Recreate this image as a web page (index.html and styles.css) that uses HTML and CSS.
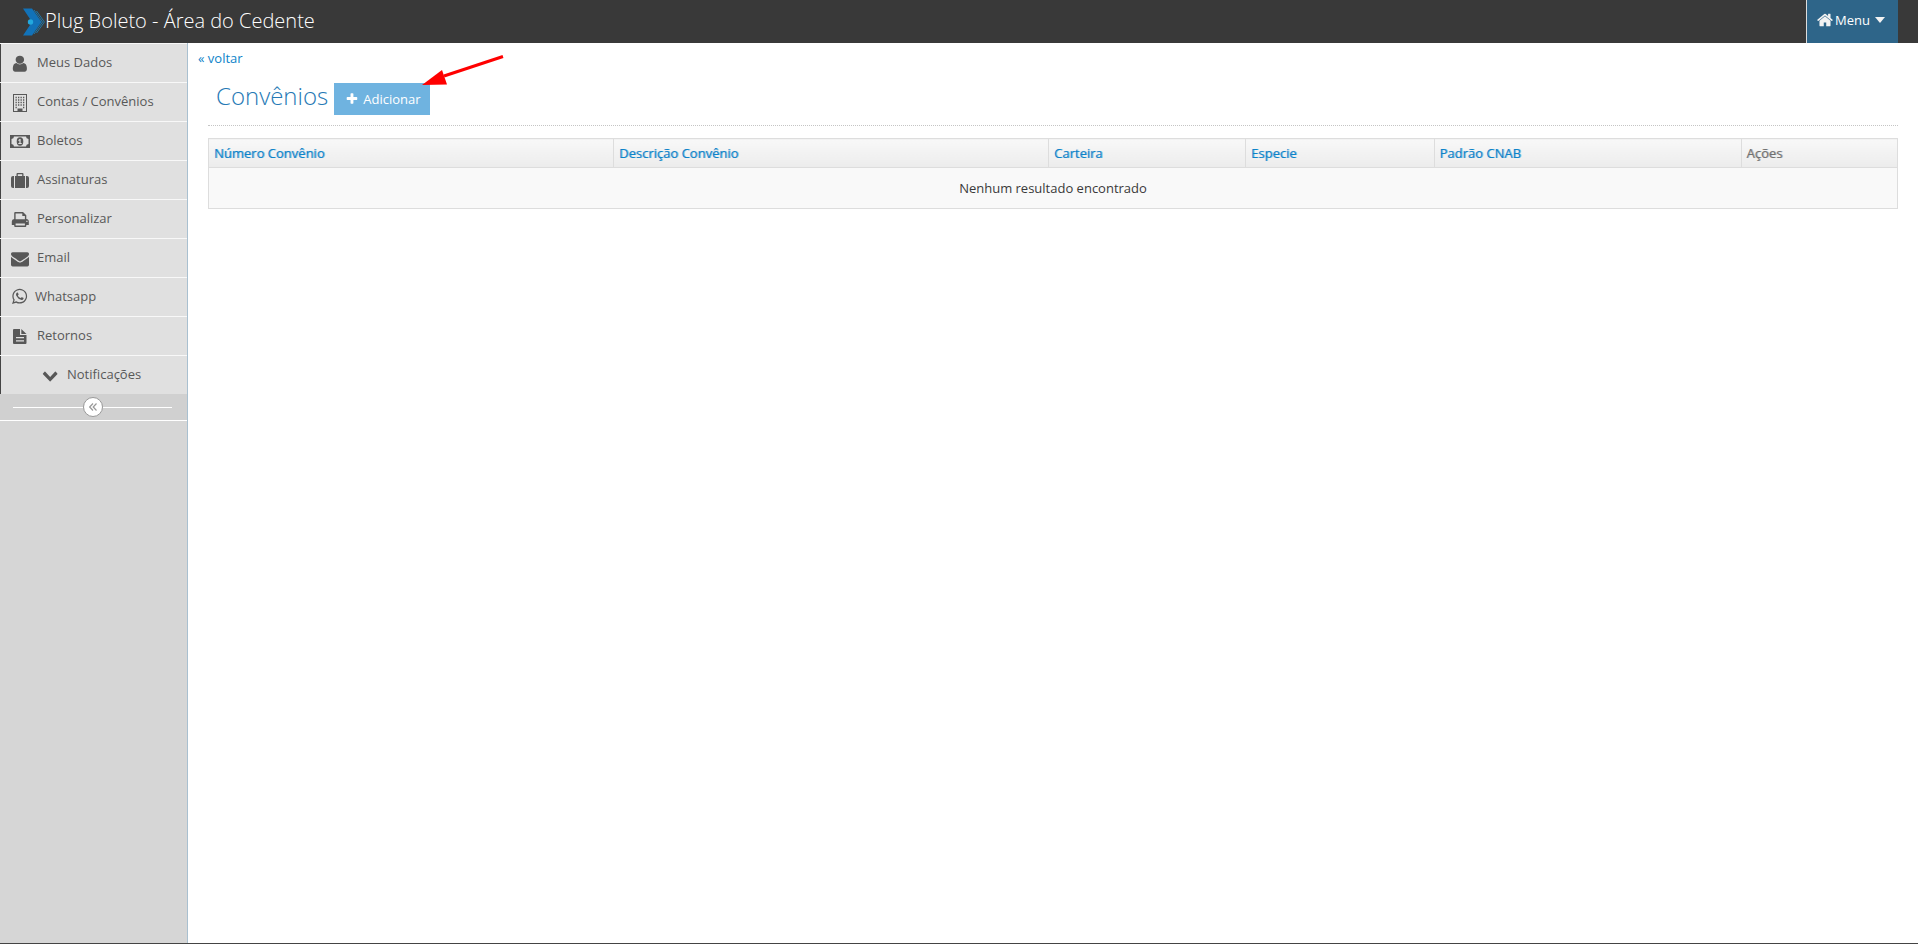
FILE: index.html
```html
<!DOCTYPE html>
<html lang="pt-BR">
<head>
<meta charset="utf-8">
<title>Plug Boleto - Área do Cedente</title>
<link rel="stylesheet" href="styles.css">
</head>
<body>
<header class="navbar">
  <a class="brand" href="#">
    <svg class="logo" viewBox="0 0 22 28" aria-hidden="true">
      <path d="M0 .5H9L18.500 14L9 27.500H0L9 14Z" fill="#1272b8"/>
      <circle cx="7.500" cy="14" r="2.700" fill="#22a9de"/>
      <path d="M11 2L19.500 14L11 26M13.500 3L21.400 14L13.500 25" fill="none" stroke="#1b86c4" stroke-width=".8"/>
    </svg>
    <span>Plug Boleto - Área do Cedente</span>
  </a>
  <button class="menu-button" type="button">
    <svg class="home" viewBox="64 64 1664 1664" aria-hidden="true"><path d="M1472 992v480q0 26-19 45t-45 19h-384v-384h-256v384h-384q-26 0-45-19t-19-45v-480q0-1 .5-3t.5-3l575-474 575 474q1 2 1 6zm223-69l-62 74q-8 9-21 11h-3q-13 0-21-7l-692-577-692 577q-12 8-24 7-13-2-21-11l-62-74q-8-10-7-23.500t11-21.500l719-599q32-26 76-26t76 26l244 204v-195q0-14 9-23t23-9h192q14 0 23 9t9 23v408l219 182q10 8 11 21.500t-7 23.500z"/></svg>
    <span>Menu</span>
    <svg class="caret" viewBox="0 0 10 6" aria-hidden="true"><path d="M0 0H10L5 6Z"/></svg>
  </button>
</header>
<div class="page">
  <nav class="sidebar">
    <ul class="nav-list">
      <li><a href="#"><svg class="icon" viewBox="0 0 24 24"><path transform="translate(2 3.300) scale(.011 .0105)" d="M1536 1399q0 109-62.500 187t-150.500 78h-854q-88 0-150.500-78t-62.500-187q0-85 8.500-160.500t31.500-152 58.500-131 94-89 134.500-34.500q131 128 313 128t313-128q76 0 134.500 34.500t94 89 58.500 131 31.500 152 8.500 160.500zm-256-887q0 159-112.500 271.500t-271.500 112.500-271.500-112.500-112.500-271.500 112.500-271.500 271.500-112.500 271.500 112.500 112.500 271.500z"/></svg><span>Meus Dados</span></a></li>
      <li><a href="#"><svg class="icon" viewBox="0 0 24 24"><path fill-rule="evenodd" d="M5 4H19V22H5ZM6 5V21H9.500V18.500H14.500V21H18V5Z"/><path d="M7.500 7.500H17M7.500 10H17M7.500 12.500H17M7.500 15H17M7.500 17.500H9M15 17.500H17" fill="none" stroke="#585858" stroke-width="1.300" stroke-dasharray="1.300 1.200"/><path d="M10.500 19.500H13.500V21H10.500Z"/></svg><span>Contas / Convênios</span></a></li>
      <li><a href="#"><svg class="icon" viewBox="0 0 24 24"><path fill-rule="evenodd" d="M2 6H22V19H2ZM6 7.500A2.600 2.600 0 0 1 3.500 10V15A2.600 2.600 0 0 1 6 17.500H18A2.600 2.600 0 0 1 20.500 15V10A2.600 2.600 0 0 1 18 7.500Z"/><path fill-rule="evenodd" d="M12 8.300A3.300 4.200 0 0 1 12 16.700A3.300 4.200 0 0 1 12 8.300ZM11.600 10L10.200 11.200L10.800 11.900L11.400 11.500V14H10.300V15H13.700V14H12.600V10Z"/></svg><span>Boletos</span></a></li>
      <li><a href="#"><svg class="icon" viewBox="0 0 24 24"><path fill-rule="evenodd" d="M7 20V8H8.500V6A1 1 0 0 1 9.500 5H14.500A1 1 0 0 1 15.500 6V8H17V20ZM9.800 8H14.200V6.300H9.800Z"/><path d="M6 8V20H5A2 2 0 0 1 3 18V10A2 2 0 0 1 5 8ZM18 8H19A2 2 0 0 1 21 10V18A2 2 0 0 1 19 20H18Z"/></svg><span>Assinaturas</span></a></li>
      <li><a href="#"><svg class="icon" viewBox="0 0 24 24"><path fill-rule="evenodd" d="M6.200 12V6A1 1 0 0 1 7.200 5H15L18.300 8.300V12A2.500 2.500 0 0 1 20.800 14.500V18H18.300V19A1 1 0 0 1 17.300 20H7.200A1 1 0 0 1 6.200 19V18H3.800V14.500A2.500 2.500 0 0 1 6.200 12ZM7.600 6.400V12.300H16.900V9H14.300V6.400ZM7.600 16.500V18.600H16.900V16.500ZM18.300 13.800V15H19.500V13.800Z"/></svg><span>Personalizar</span></a></li>
      <li><a href="#"><svg class="icon" viewBox="0 0 24 24"><path transform="translate(3 3.700) scale(.01005)" d="M1792 710v794q0 66-47 113t-113 47h-1472q-66 0-113-47t-47-113v-794q44 49 101 87 362 246 497 345 57 42 92.500 65.500t94.500 48 110 24.500h2q51 0 110-24.500t94.500-48 92.500-65.500q170-123 498-345 57-39 100-87zm0-294q0 79-49 151t-122 123q-376 261-468 325-10 7-42.500 31t-54 38.500-52 32.500-57.500 27-50 9h-2q-23 0-50-9t-57.500-27-52-32.500-54-38.500-42.500-31q-91-64-262-182.500t-205-142.500q-62-42-117-115.500t-55-136.500q0-78 41.500-130t118.500-52h1472q65 0 112.500 47t47.500 113z"/></svg><span>Email</span></a></li>
      <li><a href="#"><svg class="icon icon-narrow" viewBox="0 0 22 24"><path transform="translate(2.800 2.600) scale(.0098)" d="M1113 974q13 0 97.500 44t89.500 53q2 5 2 15 0 33-17 76-16 39-71 65.500t-102 26.500q-57 0-190-62-98-45-170-118t-148-185q-72-107-71-194v-8q3-91 74-158 24-22 52-22 6 0 18 1.500t19 1.500q19 0 26.500 6.500t15.500 27.500q8 20 33 88t25 75q0 21-34.500 57.500t-34.500 46.500q0 7 5 15 34 73 102 137 56 53 151 101 12 7 22 7 15 0 54-48.500t52-48.500zm-203 530q127 0 243.500-50t200.500-134 134-200.500 50-243.500-50-243.500-134-200.500-200.500-134-243.500-50-243.500 50-200.500 134-134 200.500-50 243.500q0 203 120 368l-79 233 242-77q158 104 345 104zm0-1382q153 0 292.500 60t240.500 161 161 240.500 60 292.500-60 292.500-161 240.500-240.500 161-292.500 60q-195 0-365-94l-417 134 136-405q-108-178-108-389 0-153 60-292.500t161-240.500 240.500-161 292.500-60z"/></svg><span>Whatsapp</span></a></li>
      <li><a href="#"><svg class="icon" viewBox="0 0 24 24"><path fill-rule="evenodd" d="M6 5H12V11H18.500V19A1 1 0 0 1 17.500 20H6A1 1 0 0 1 5 19V6A1 1 0 0 1 6 5ZM8 13V14.200H16V13ZM8 16.200V17.400H16V16.200Z"/><path d="M13.300 5L18.500 10H13.300Z"/></svg><span>Retornos</span></a></li>
      <li><a class="nested" href="#"><svg class="icon" viewBox="0 0 24 24"><path transform="translate(4 3.500) scale(.0091 .0096)" d="M1683 808l-742 741q-19 19-45 19t-45-19l-742-741q-19-19-19-45.500t19-45.500l166-165q19-19 45-19t45 19l531 531 531-531q19-19 45-19t45 19l166 165q19 19 19 45.500t-19 45.500z"/></svg><span>Notificações</span></a></li>
    </ul>
    <div class="collapse">
      <button class="collapse-button" type="button" aria-label="Recolher menu">
        <svg viewBox="0 0 8 8" aria-hidden="true"><path d="M4 .5L.7 4L4 7.500M7.500 .5L4.200 4L7.500 7.500" fill="none" stroke="#999" stroke-width="1.200"/></svg>
      </button>
    </div>
  </nav>
  <main class="content">
    <a class="back" href="#">« voltar</a>
    <div class="panel">
      <div class="page-header">
        <h1>Convênios</h1>
        <div class="add-wrap">
          <button class="add" type="button"><svg viewBox="100 100 1600 1600" aria-hidden="true"><path d="M1600 736v192q0 40-28 68t-68 28h-416v416q0 40-28 68t-68 28h-192q-40 0-68-28t-28-68v-416h-416q-40 0-68-28t-28-68v-192q0-40 28-68t68-28h416v-416q0-40 28-68t68-28h192q40 0 68 28t28 68v416h416q40 0 68 28t28 68z"/></svg><span>Adicionar</span></button>
          <svg class="pointer" viewBox="0 0 84 32" aria-hidden="true"><path d="M22 22L81 2.500" stroke="#f00" stroke-width="3"/><path d="M0 31L20 16L25 30.500Z" fill="#f00"/></svg>
        </div>
      </div>
      <table class="grid">
        <colgroup><col class="c-num"><col class="c-desc"><col class="c-cart"><col class="c-esp"><col class="c-cnab"><col class="c-acoes"></colgroup>
        <thead><tr>
          <th scope="col"><a href="#">Número Convênio</a></th>
          <th scope="col"><a href="#">Descrição Convênio</a></th>
          <th scope="col"><a href="#">Carteira</a></th>
          <th scope="col"><a href="#">Especie</a></th>
          <th scope="col"><a href="#">Padrão CNAB</a></th>
          <th scope="col">Ações</th>
        </tr></thead>
        <tbody><tr><td colspan="6">Nenhum resultado encontrado</td></tr></tbody>
      </table>
    </div>
  </main>
</div>
</body>
</html>
```
FILE: styles.css
```css
* { box-sizing: border-box; }
body {
  display: flex;
  flex-direction: column;
  min-height: 100vh;
  margin: 0;
  border-bottom: 1px solid #444;
  background: #fff;
  color: #393939;
  font: 13px/20px "Open Sans", sans-serif;
}
a { color: #0d83c9; text-decoration: none; }
button { font: inherit; cursor: pointer; }

.navbar {
  display: flex;
  justify-content: space-between;
  height: 43px;
  padding: 0 20px 0 23px;
  background: #393939;
}
.brand {
  display: flex;
  align-items: center;
  color: #fff;
  font-size: 20px;
  font-weight: 300;
}
.brand span { padding-bottom: 2px; }
.logo { width: 22px; height: 28px; }
.menu-button {
  display: flex;
  align-items: center;
  gap: 2px;
  padding: 0 13px 3px 10px;
  border: 0;
  border-left: 1px solid #ddd;
  background: #2e6589;
  color: #fff;
}
.menu-button svg { fill: #f2f2f2; }
.home { width: 16px; height: 16px; }
.menu-button .caret { width: 10px; height: 6px; margin-left: 3px; }

.page { display: flex; flex: 1; }
.sidebar {
  flex: 0 0 188px;
  border-right: 1px solid #a9c0d0;
  background: #d6d6d6;
}
.nav-list { margin: 0; padding: 0; list-style: none; }
.nav-list li { border-top: 1px solid #f8f8f8; }
.nav-list a {
  display: flex;
  align-items: center;
  gap: 5px;
  height: 38px;
  padding-left: 7px;
  border-left: 1px solid #444;
  background: #e0e0e0;
  color: #585858;
}
.nav-list a.nested { padding-left: 37px; }
.icon { width: 24px; height: 24px; fill: #585858; }
.icon-narrow { width: 22px; }
.nav-list span { padding-bottom: 2px; }
.collapse {
  display: flex;
  align-items: center;
  justify-content: center;
  height: 27px;
  padding: 0 15px 0 13px;
  border-bottom: 1px solid #fff;
  background: #d0d0d0;
}
.collapse::before, .collapse::after {
  content: "";
  flex: 1;
  height: 1px;
  background: #fff;
}
.collapse-button {
  display: flex;
  align-items: center;
  justify-content: center;
  width: 20px;
  height: 20px;
  padding: 0;
  border: 1px solid #999;
  border-radius: 50%;
  background: #fff;
}
.collapse-button svg { width: 8px; height: 8px; }

.content { flex: 1; padding: 5px 20px 20px 10px; }
.back { display: block; }
.panel { padding: 15px 0 0 10px; }
.page-header {
  display: flex;
  align-items: flex-start;
  gap: 6px;
  height: 43px;
  margin-bottom: 12px;
  padding-left: 8px;
  border-bottom: 1px dotted #c5c5c5;
}
h1 {
  margin: 0;
  color: #2679b5;
  font-size: 24px;
  font-weight: 300;
  line-height: 26px;
}
.add-wrap { position: relative; }
.add {
  display: flex;
  align-items: center;
  gap: 5px;
  height: 32px;
  padding: 0 9px 0 12px;
  border: 0;
  background: #6fb3e0;
  color: #fff;
}
.add svg { width: 12px; height: 12px; fill: #fff; }
.pointer {
  position: absolute;
  top: -29px;
  left: 88px;
  width: 84px;
  height: 32px;
}
.grid {
  width: 100%;
  table-layout: fixed;
  border-collapse: collapse;
  border: 1px solid #ddd;
}
.c-num { width: 23.98%; }
.c-desc { width: 25.76%; }
.c-cart { width: 11.66%; }
.c-esp { width: 11.16%; }
.c-cnab { width: 18.18%; }
.c-acoes { width: 9.26%; }
.grid th {
  height: 29px;
  padding: 4px 5px;
  border: 1px solid #ddd;
  background: linear-gradient(#f8f8f8, #ececec);
  color: #707070;
  font-weight: 500;
  text-align: left;
  text-shadow: 1px 0 rgba(112, 112, 112, 0.5);
}
.grid th a { text-shadow: 1px 0 rgba(13, 131, 201, 0.5); }
.grid td {
  height: 41px;
  padding: 10px 5px;
  background: #f9f9f9;
  text-align: center;
}
```
